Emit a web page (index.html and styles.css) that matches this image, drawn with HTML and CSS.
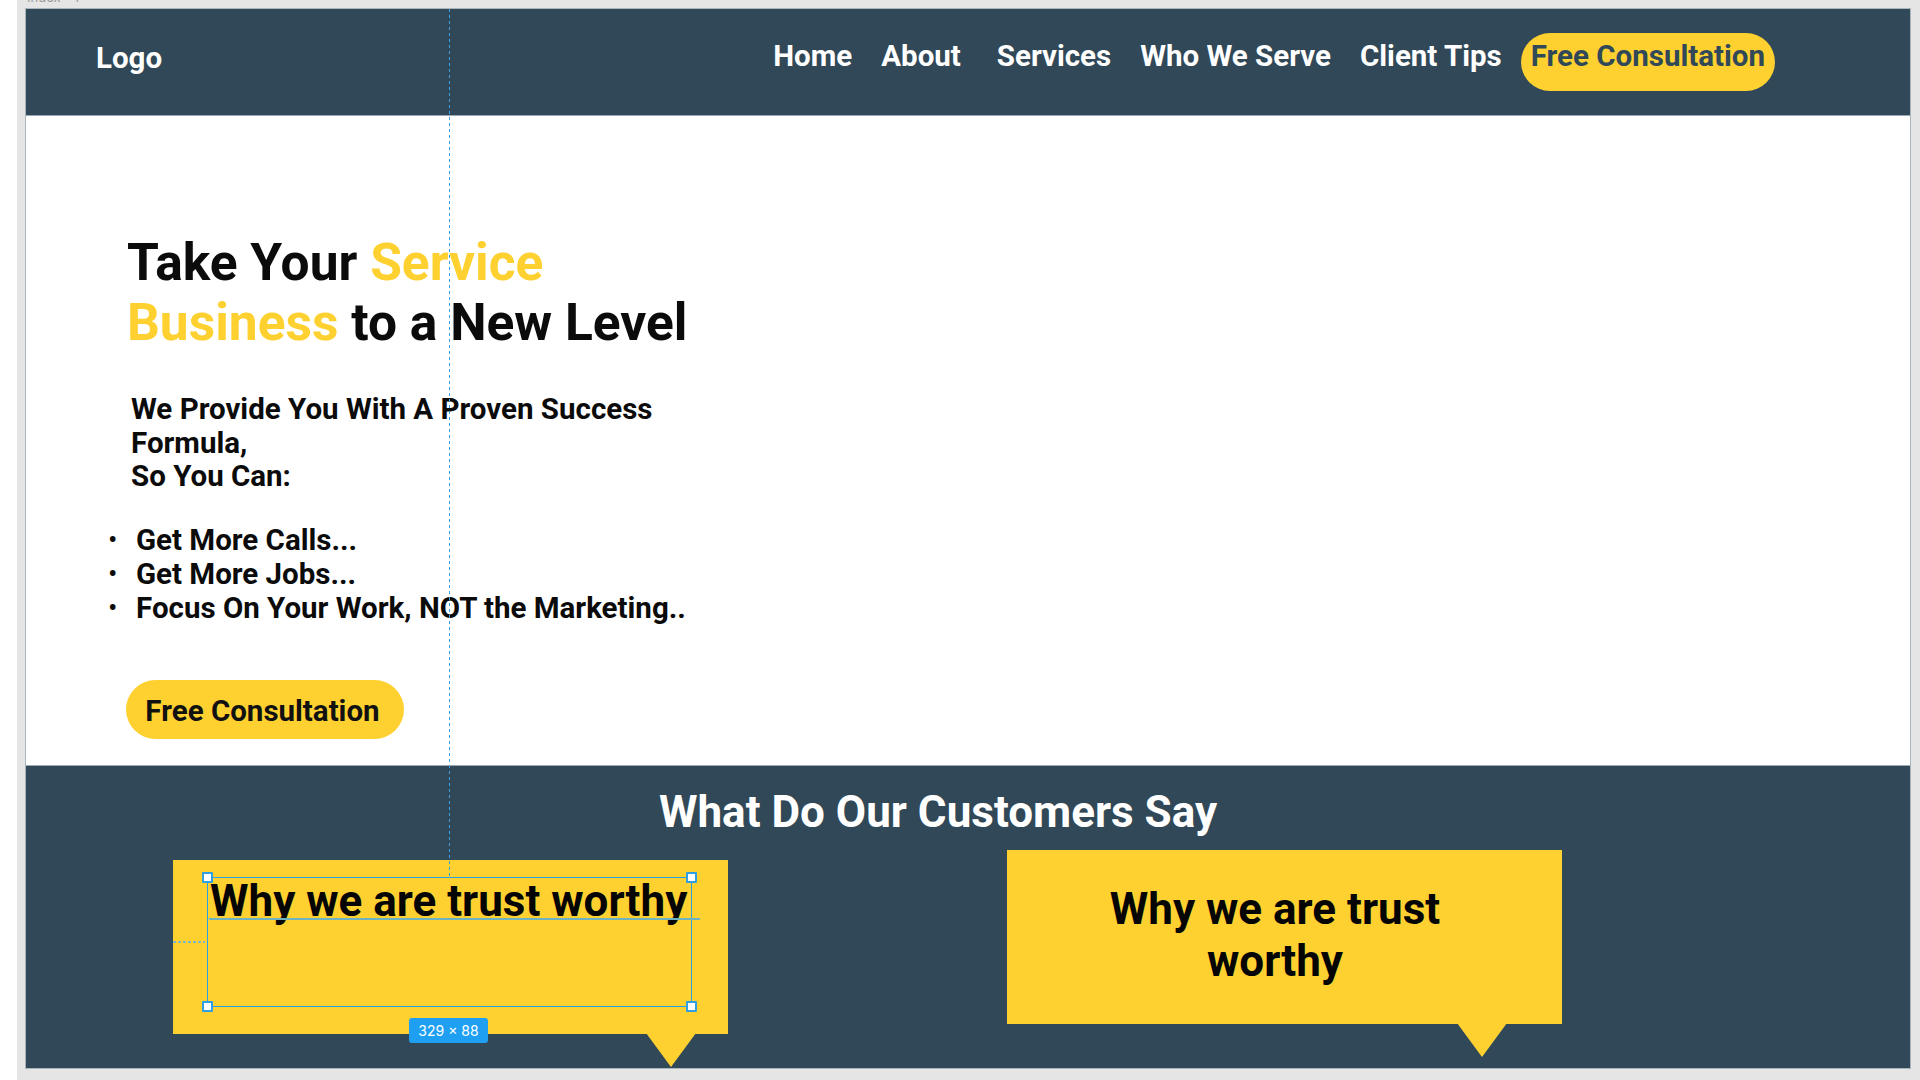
FILE: index.html
```html
<!DOCTYPE html>
<html lang="en">
<head>
<meta charset="utf-8">
<title>Index - 1</title>
<link rel="stylesheet" href="styles.css">
</head>
<body>
<div class="canvas">
  <div class="frame-label">Index - 1</div>
  <div class="frame">
    <header class="nav">
      <div class="logo">Logo</div>
      <nav class="menu">
        <a class="menu-link">Home</a>
        <a class="menu-link menu-about">About</a>
        <a class="menu-link">Services</a>
        <a class="menu-link">Who We Serve</a>
        <a class="menu-link">Client Tips</a>
        <a class="nav-cta">Free Consultation</a>
      </nav>
    </header>

    <section class="hero">
      <h1 class="hero-title">Take Your <span class="accent">Service Business</span> to a New Level</h1>
      <p class="hero-lead">We Provide You With A Proven Success Formula,<br>So You Can:</p>
      <ul class="hero-list">
        <li>Get More Calls...</li>
        <li>Get More Jobs...</li>
        <li>Focus On Your Work, NOT the Marketing..</li>
      </ul>
      <a class="hero-cta">Free Consultation</a>
    </section>

    <section class="reviews">
      <h2 class="reviews-title">What Do Our Customers Say</h2>
      <div class="reviews-row">
        <div class="bubble bubble-left">
          <p class="bubble-text">Why we are trust worthy</p>
        </div>
        <div class="bubble bubble-right">
          <p class="bubble-text bubble-text-wrap">Why we are trust worthy</p>
        </div>
      </div>
    </section>

    <div class="guide-v"></div>
    <div class="sel-box">
      <span class="handle handle-tl"></span>
      <span class="handle handle-tr"></span>
      <span class="handle handle-bl"></span>
      <span class="handle handle-br"></span>
    </div>
    <div class="baseline-mark"></div>
    <div class="spacing-mark"></div>
    <div class="size-label">329 × 88</div>
  </div>
</div>
</body>
</html>
```

FILE: styles.css
```css
* { box-sizing: border-box; }

html, body {
  margin: 0;
  padding: 0;
  width: 1920px;
  height: 1080px;
  overflow: hidden;
  background: #ffffff;
  font-family: Roboto, "Liberation Sans", Arial, sans-serif;
}

.canvas {
  position: relative;
  margin-left: 17px;
  width: 1903px;
  height: 1080px;
  background: #e5e5e5;
  padding: 9px 0 0 9px;
}

.frame-label {
  position: absolute;
  top: -11px;
  left: 10px;
  font-family: Inter, "Noto Sans", sans-serif;
  font-size: 13px;
  color: #9c9c9c;
  line-height: 16px;
}

.frame {
  position: relative;
  width: 1884px;
  height: 1059px;
  display: flex;
  flex-direction: column;
  overflow: hidden;
  background: #ffffff;
  box-shadow: 0 0 0 1px #a9b4bb;
}

/* NAV */
.nav {
  height: 107px;
  flex: 0 0 107px;
  background: #304857;
  border-bottom: 1px solid #9aa9b3;
  display: flex;
  align-items: flex-start;
  padding: 24px 135px 0 70px;
}

.logo {
  margin-top: 9px;
  color: #ffffff;
  font-size: 29.5px;
  line-height: 33px;
  font-weight: 700;
}

.menu {
  margin-left: auto;
  display: flex;
  align-items: flex-start;
  gap: 29px;
}

.menu-link {
  margin-top: 7px;
  color: #ffffff;
  font-size: 29.5px;
  line-height: 33px;
  font-weight: 700;
  white-space: nowrap;
}

.menu-about { margin-right: 7px; }

.nav-cta {
  margin-left: -10px;
  height: 58px;
  padding: 7px 10px 0 10px;
  border-radius: 29px;
  background: #fed130;
  color: #304857;
  font-size: 29.5px;
  line-height: 33px;
  font-weight: 700;
  white-space: nowrap;
}

/* HERO */
.hero {
  flex: 1 1 auto;
  padding: 117px 0 0 101px;
  background: #ffffff;
  color: #0b0b0b;
}

.hero-title {
  margin: 0;
  width: 620px;
  font-size: 51.5px;
  line-height: 60px;
  font-weight: 700;
  color: #0b0b0b;
}

.accent { color: #fed130; }

.hero-lead {
  margin: 40px 0 0 4px;
  width: 570px;
  font-size: 29.5px;
  line-height: 33.5px;
  font-weight: 700;
}

.hero-list {
  list-style: none;
  margin: 29px 0 0 -19px;
  padding: 0;
  font-size: 29.5px;
  line-height: 34px;
  font-weight: 700;
}

.hero-list li {
  display: flex;
}

.hero-list li::before {
  content: "•";
  width: 28px;
  flex: 0 0 28px;
  font-size: 28px;
  font-weight: 400;
}

.hero-cta {
  margin: 55px 0 0 -1px;
  width: 278px;
  height: 59px;
  padding: 4px 5px 0 0;
  display: flex;
  align-items: center;
  justify-content: center;
  border-radius: 30px;
  background: #fed130;
  color: #111111;
  font-size: 29.5px;
  font-weight: 700;
}

/* REVIEWS */
.reviews {
  flex: 0 0 303px;
  height: 303px;
  background: #304857;
  border-top: 1px solid #9aa9b3;
  padding: 22px 0 0 0;
}

.reviews-title {
  margin: 0;
  padding-right: 60px;
  text-align: center;
  color: #ffffff;
  font-size: 44px;
  line-height: 48px;
  font-weight: 700;
}

.reviews-row {
  display: flex;
  align-items: flex-start;
  gap: 279px;
  padding-left: 147px;
  margin-top: 14px;
}

.bubble {
  position: relative;
  width: 555px;
  height: 174px;
  background: #fed130;
}

.bubble::after {
  content: "";
  position: absolute;
  top: 173px;
  width: 50px;
  height: 34px;
  background: #fed130;
  clip-path: polygon(0 0, 100% 0, 50% 100%);
}

.bubble-left { margin-top: 10px; padding: 15px 0 0 37px; }
.bubble-left::after { left: 473px; }

.bubble-right { padding: 33px 0 0 48px; }
.bubble-right::after { left: 450px; }

.bubble-text {
  margin: 0;
  color: #050505;
  font-size: 44px;
  line-height: 52px;
  font-weight: 700;
  white-space: nowrap;
}

.bubble-text-wrap {
  width: 440px;
  white-space: normal;
  text-align: center;
}

/* EDITOR OVERLAYS */
.guide-v {
  position: absolute;
  left: 423px;
  top: 0;
  width: 1px;
  height: 868px;
  background: repeating-linear-gradient(to bottom, #3a9fe4 0 3px, transparent 3px 6px);
}

.sel-box {
  position: absolute;
  left: 181px;
  top: 868px;
  width: 485px;
  height: 130px;
  border: 1.5px solid #2f9fe3;
}

.handle {
  position: absolute;
  width: 11px;
  height: 11px;
  background: #ffffff;
  border: 2px solid #2f9fe3;
  border-radius: 1px;
}

.handle-tl { left: -6px; top: -6px; }
.handle-tr { right: -6px; top: -6px; }
.handle-bl { left: -6px; bottom: -6px; }
.handle-br { right: -6px; bottom: -6px; }

.baseline-mark {
  position: absolute;
  left: 183px;
  top: 909px;
  width: 491px;
  height: 2px;
  background: #6fb2c2;
}

.spacing-mark {
  position: absolute;
  left: 147px;
  top: 932px;
  width: 32px;
  height: 2px;
  background: repeating-linear-gradient(to right, #7fb7c5 0 3px, transparent 3px 5px);
}

.size-label {
  position: absolute;
  left: 383px;
  top: 1009px;
  width: 79px;
  height: 25px;
  border-radius: 3px;
  background: #1e9ff2;
  color: #ffffff;
  font-family: Inter, Roboto, sans-serif;
  font-size: 14px;
  line-height: 25px;
  text-align: center;
}
```
